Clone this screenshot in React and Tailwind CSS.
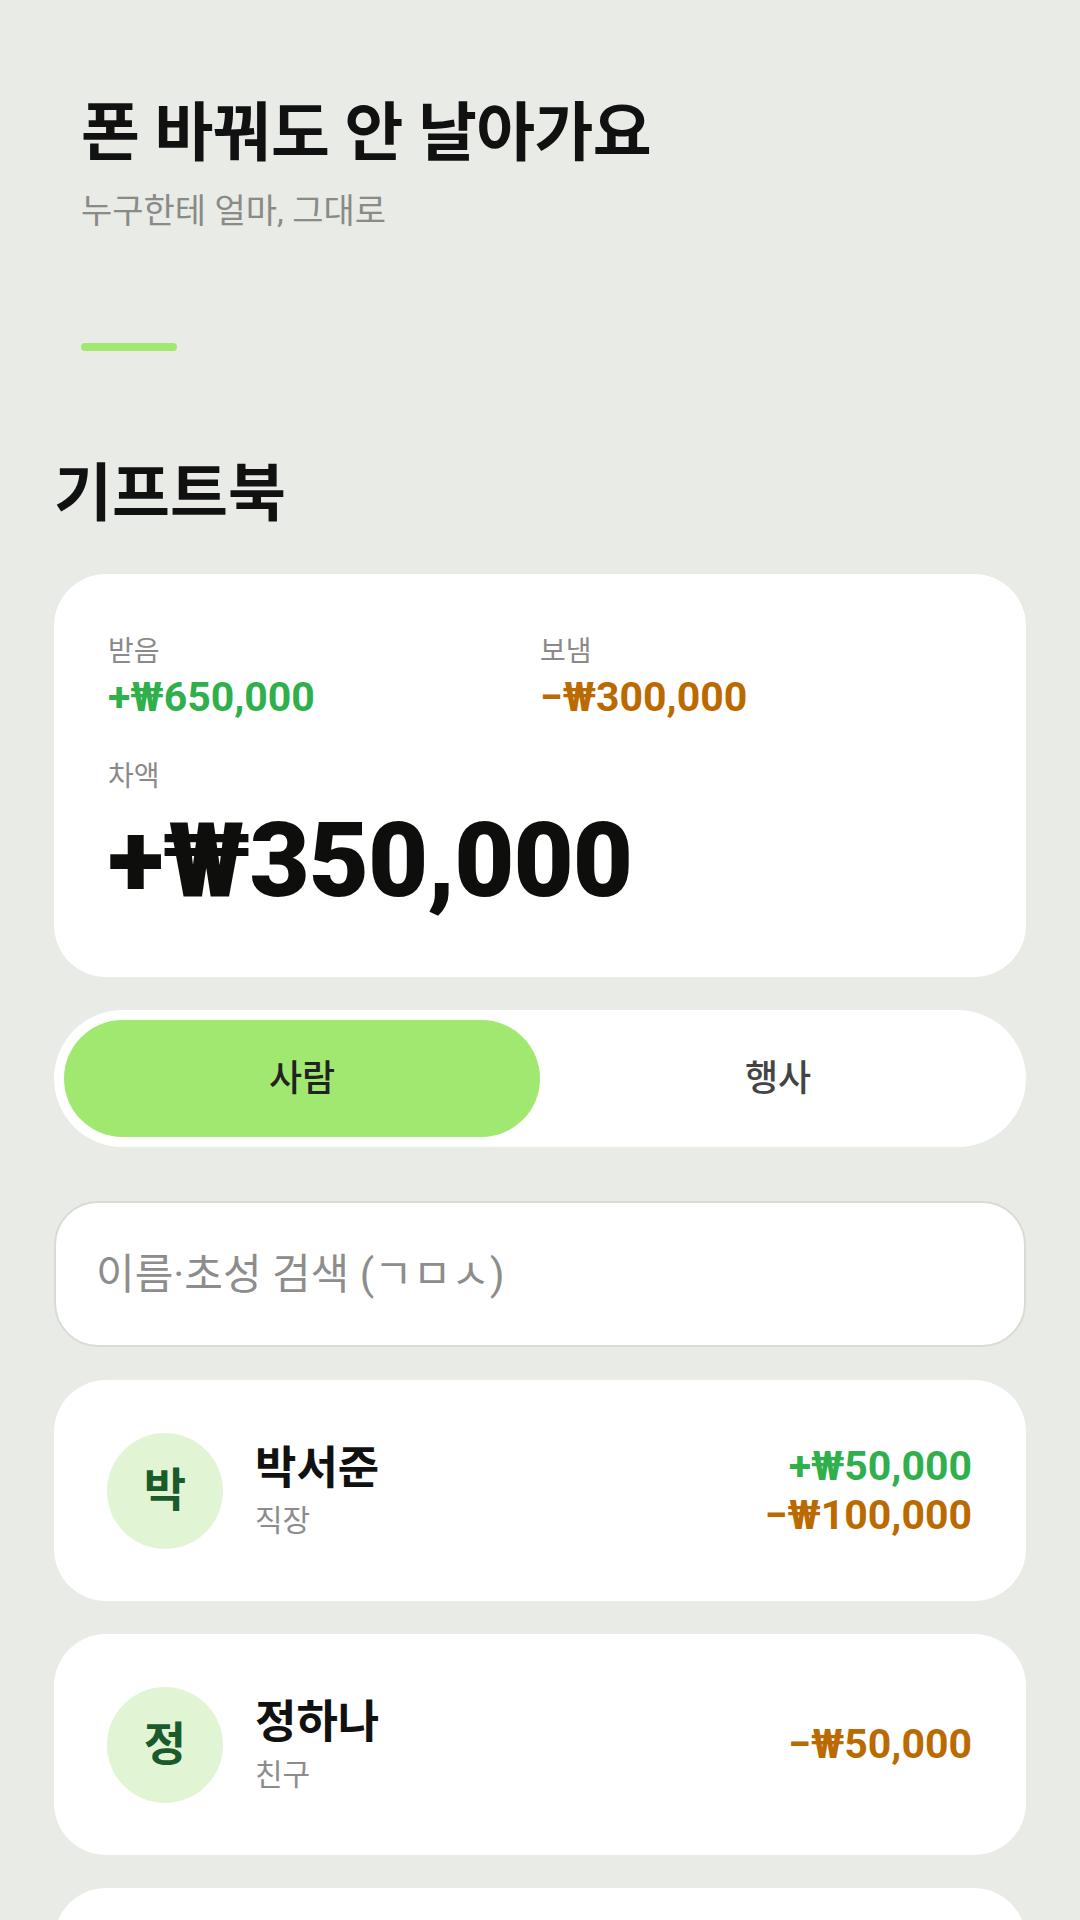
import { useState } from 'react';

const people = [
  { name: '박서준', tag: '직장', received: 50000, sent: 100000 },
  { name: '정하나', tag: '친구', received: 0, sent: 50000 },
  { name: '김민지', tag: '가족', received: 100000, sent: 0 },
];

const won = (n) => '₩' + n.toLocaleString('en-US');

const PersonRow = ({ person }) => (
  <div className="flex h-[221px] items-center rounded-[52px] bg-white pl-[53px] pr-[54px]">
    <div className="flex h-[116px] w-[116px] shrink-0 items-center justify-center rounded-full bg-[#e1f5d5] text-[46px] font-bold text-[#1b5a2a]">
      {person.name[0]}
    </div>
    <div className="ml-[32px] flex flex-1 flex-col">
      <span className="text-[45px] font-semibold leading-[54px] text-[#111111]">{person.name}</span>
      <span className="mt-[6px] text-[30px] leading-[38px] text-[#8c8c8c]">{person.tag}</span>
    </div>
    <div className="flex flex-col items-end text-[41px] font-bold leading-[49px]">
      {person.received > 0 && <span className="text-[#2fb04c]">+{won(person.received)}</span>}
      {person.sent > 0 && <span className="text-[#bb6a00]">−{won(person.sent)}</span>}
    </div>
  </div>
);

export default function App() {
  const [tab, setTab] = useState('people');
  const [query, setQuery] = useState('');

  return (
    <div className="min-h-screen overflow-hidden bg-[#e9ebe6] font-[Roboto,'Noto_Sans_CJK_KR',sans-serif]">
      {/* onboarding header */}
      <div className="px-[81px] pt-[92px]">
        <h1 className="text-[64px] font-bold leading-[84px] tracking-[-0.01em] text-[#111111]">폰 바꿔도 안 날아가요</h1>
        <p className="mt-[14px] text-[34px] leading-[42px] text-[#8a8a86]">누구한테 얼마, 그대로</p>
        <div className="mt-[111px] h-2 w-24 rounded-full bg-[#a0e86f]" />
      </div>

      <div className="px-[54px]">
        <h2 className="mt-[105px] text-[63px] font-bold leading-[76px] text-[#111111]">기프트북</h2>

        {/* summary */}
        <div className="mt-[42px] rounded-[52px] bg-white px-[54px] pb-[58px] pt-[58px]">
          <div className="grid grid-cols-2">
            <div className="flex flex-col">
              <span className="text-[28px] leading-[40px] text-[#8a8a8a]">받음</span>
              <span className="mt-[3px] text-[41px] font-bold leading-[44px] text-[#2fb04c]">+₩650,000</span>
            </div>
            <div className="flex flex-col">
              <span className="text-[28px] leading-[40px] text-[#8a8a8a]">보냄</span>
              <span className="mt-[3px] text-[41px] font-bold leading-[44px] text-[#bb6a00]">−₩300,000</span>
            </div>
          </div>
          <span className="mt-[38px] block text-[28px] leading-[40px] text-[#8a8a8a]">차액</span>
          <span className="mt-[6px] block text-[104px] font-black leading-[116px] tracking-[-0.01em] text-[#0e0e0c]">+₩350,000</span>
        </div>

        {/* tabs */}
        <div className="mt-[33px] flex h-[137px] rounded-full bg-white p-[10px]">
          <button
            onClick={() => setTab('people')}
            className={`flex-1 rounded-full text-[36px] font-medium ${tab === 'people' ? 'bg-[#a0e86f] text-[#222222]' : 'text-[#444444]'}`}
          >
            사람
          </button>
          <button
            onClick={() => setTab('events')}
            className={`flex-1 rounded-full text-[36px] font-medium ${tab === 'events' ? 'bg-[#a0e86f] text-[#222222]' : 'text-[#444444]'}`}
          >
            행사
          </button>
        </div>

        {/* search */}
        <input
          value={query}
          onChange={(e) => setQuery(e.target.value)}
          placeholder="이름·초성 검색 (ㄱㅁㅅ)"
          className="mt-[54px] block h-[146px] w-full rounded-[44px] border-2 border-[#d9dbd5] bg-white px-[40px] text-[42px] text-[#111111] outline-none placeholder:text-[#8d8d8d]"
        />

        <div className="mt-[33px] flex flex-col gap-[33px] pb-[60px]">
          {people.map((p) => (
            <PersonRow key={p.name} person={p} />
          ))}
        </div>
      </div>
    </div>
  );
}
